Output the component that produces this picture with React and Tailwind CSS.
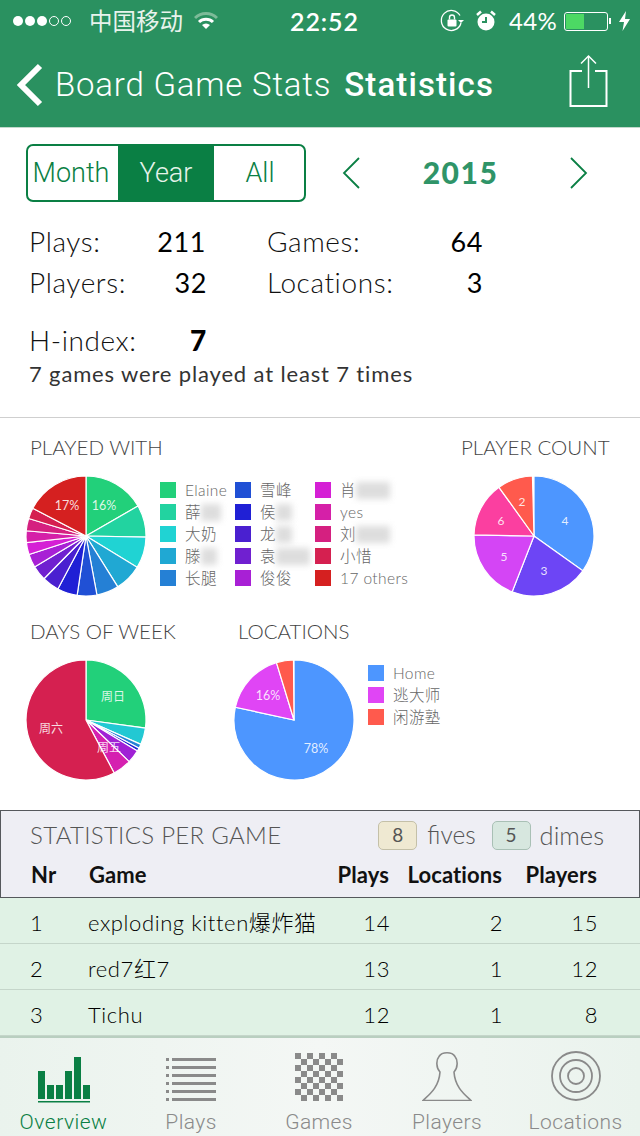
import React from "react";

const CJK = '"Noto Sans CJK SC"';
function pt(cx, cy, r, a) {
  const t = (a * Math.PI) / 180;
  return [cx + r * Math.sin(t), cy - r * Math.cos(t)];
}
function Pie({ size = 124, r = 60, stops, colors, labels = [], font = 12 }) {
  const c = size / 2;
  let prev = 0;
  return (
    <svg width={size} height={size} viewBox={`0 0 ${size} ${size}`} className="shrink-0 block">
      {stops.map((s, i) => {
        const [x1, y1] = pt(c, c, r, prev);
        const [x2, y2] = pt(c, c, r, s);
        const large = s - prev > 180 ? 1 : 0;
        const d = `M${c} ${c}L${x1} ${y1}A${r} ${r} 0 ${large} 1 ${x2} ${y2}Z`;
        prev = s;
        return <path key={i} d={d} fill={colors[i]} stroke="#fff" strokeWidth="1.2" />;
      })}
      {labels.map((l, i) => (
        <text key={i} x={l[1]} y={l[2]} fontSize={font} fill="#fff" fillOpacity="0.85" textAnchor="middle" fontFamily={`Lato, ${CJK}, sans-serif`}>
          {l[0]}
        </text>
      ))}
    </svg>
  );
}

function Blur({ w }) {
  return <span className="inline-block h-[17px] align-middle bg-[#cfcfcf] blur-[3px] opacity-70" style={{ width: w }} />;
}

function Legend({ items, width }) {
  return (
    <div className="flex flex-col gap-[6px]" style={{ width }}>
      {items.map((it, i) => (
        <div key={i} className="flex items-center h-[16px] whitespace-nowrap">
          <span className="w-[16px] h-[16px] mr-[9px] shrink-0" style={{ background: it[0] }} />
          <span className="text-[15.5px] leading-[16px] text-[#666] font-light tracking-[0.4px]">{it[1]}</span>
          {it[2] ? <Blur w={it[2]} /> : null}
        </div>
      ))}
    </div>
  );
}

const withColors = ["#22d07a","#22d3a0","#20d3d3","#20a8d3","#2580d5","#2050d5","#2020d5","#4a20d0","#7020d0","#a820d5","#d520d5","#d520a8","#d52080","#d52050","#d52020"];
const title = "text-[20.5px] leading-[24px] text-[#444] font-light";

function StatusBar() {
  return (
    <div className="h-[40px] flex items-center pl-[13px] pt-[2px] text-white">
      <div className="flex items-center gap-[2px] w-[66px]">
        {[1,1,1,0,0].map((f, i) => (
          <span key={i} className={f ? "w-[10px] h-[10px] rounded-full bg-white" : "w-[10px] h-[10px] rounded-full border border-white"} />
        ))}
      </div>
      <span className="text-[23.5px] leading-[28px] ml-[10px] text-[#e8f3ec] whitespace-nowrap">中国移动</span>
      <svg width="24" height="18" viewBox="0 0 24 18" className="ml-[11px]">
        <path d="M1 6 A16 16 0 0 1 23 6" fill="none" stroke="#7dbb99" strokeWidth="3" />
        <path d="M5 10 A10 10 0 0 1 19 10" fill="none" stroke="#fff" strokeWidth="3" />
        <path d="M8 13 L12 17 L16 13 A6 6 0 0 0 8 13Z" fill="#fff" />
      </svg>
      <span className="ml-[72px] text-[25px] leading-[28px] font-semibold tracking-[0.9px] w-[72px] whitespace-nowrap">22:52</span>
      <svg width="24" height="24" viewBox="0 0 24 24" className="ml-[78px]">
        <path d="M21 14 A10 10 0 1 1 20 6.5" fill="none" stroke="#fff" strokeWidth="1.3" />
        <path d="M18 11 h6 l-3 3z" fill="#fff" />
        <rect x="7.5" y="10.5" width="9" height="7" rx="1" fill="#fff" />
        <path d="M9.5 10.5 V8.5 a2.5 2.5 0 0 1 5 0 V10.5" fill="none" stroke="#fff" strokeWidth="1.4" />
      </svg>
      <svg width="22" height="24" viewBox="0 0 22 24" className="ml-[11px]">
        <circle cx="11" cy="13" r="8.5" fill="#fff" />
        <path d="M11 8 V13 H7" fill="none" stroke="#2a9160" strokeWidth="2" />
        <path d="M2 6 L6 2.5 M20 6 L16 2.5" stroke="#fff" strokeWidth="2.5" />
      </svg>
      <span className="ml-[12px] text-[24px] leading-[28px] tracking-[0.3px] whitespace-nowrap">44%</span>
      <div className="ml-[7px] w-[44px] h-[19px] border border-white rounded-[3px] p-[1px] shrink-0">
        <div className="w-[18px] h-full bg-[#4cd964]" />
      </div>
      <span className="w-[2px] h-[6px] bg-white ml-[1px] shrink-0" />
      <svg width="11" height="20" viewBox="0 0 11 20" className="ml-[8px] shrink-0">
        <path d="M7 0 L0 11 H5 L3.5 20 L11 8 H6Z" fill="#fff" />
      </svg>
    </div>
  );
}

function NavBar() {
  return (
    <div className="h-[88px] flex items-center border-b border-[#c3d9cc] relative pt-[3px]">
      <svg width="28" height="44" viewBox="0 0 28 44" className="ml-[16px] shrink-0">
        <path d="M24 3 L5 22 L24 41" fill="none" stroke="#fff" strokeWidth="6" />
      </svg>
      <span className="ml-[11px] text-[33px] leading-[40px] text-white font-['Roboto',sans-serif] font-light tracking-[0.8px] whitespace-nowrap">Board Game Stats</span>
      <span className="ml-[13px] text-[33px] leading-[40px] text-white font-['Roboto',sans-serif] font-medium tracking-[1.1px] whitespace-nowrap">Statistics</span>
      <svg width="40" height="54" viewBox="0 0 40 54" className="absolute left-[569px] top-[14px]">
        <path d="M13 17 H1.5 V52 H37.5 V17 H26" fill="none" stroke="#fff" strokeWidth="2" />
        <path d="M19.5 2 V34" stroke="#fff" strokeWidth="1.5" />
        <path d="M12 9.5 L19.5 2 L27 9.5" fill="none" stroke="#fff" strokeWidth="1.5" />
      </svg>
    </div>
  );
}

function Controls() {
  return (
    <div className="flex items-center pl-[26px] pt-[16px] h-[74px]">
      <div className="flex w-[280px] h-[58px] border-2 border-[#0a7f44] rounded-[7px] overflow-hidden text-[27px] leading-[32px] text-[#0a7f44] font-['Roboto',sans-serif] font-light">
        <div className="w-[90px] flex items-center justify-center pr-[4px]">Month</div>
        <div className="w-[96px] flex items-center justify-center bg-[#0a7f44] text-[#e5f3ea]">Year</div>
        <div className="flex-1 flex items-center justify-center pl-[2px]">All</div>
      </div>
      <svg width="18" height="32" viewBox="0 0 18 32" className="ml-[36px]">
        <path d="M17 1 L2 16 L17 31" fill="none" stroke="#0a7f44" strokeWidth="1.8" />
      </svg>
      <span className="w-[210px] text-center text-[30px] leading-[40px] font-black text-[#2f9468] tracking-[1.5px] pr-[9px] pb-[2px]">2015</span>
      <svg width="18" height="32" viewBox="0 0 18 32">
        <path d="M1 1 L16 16 L1 31" fill="none" stroke="#0a7f44" strokeWidth="1.8" />
      </svg>
    </div>
  );
}

function Stat({ label, value, labelW, valW }) {
  return (
    <div className="flex items-baseline">
      <span className="font-light text-[28px]" style={{ width: labelW }}>{label}</span>
      <span className="text-right text-black" style={{ width: valW }}>{value}</span>
    </div>
  );
}

function Stats() {
  return (
    <div className="pl-[29px] pt-[19px] h-[216px] border-b border-[#cfcfcf] text-[#111]">
      <div className="grid grid-cols-[238px_1fr] text-[27px] leading-[40px] tracking-[0.6px]">
        <Stat label="Plays:" value="211" labelW={100} valW={77} />
        <Stat label="Games:" value="64" labelW={150} valW={66} />
        <Stat label="Players:" value="32" labelW={120} valW={58} />
        <Stat label="Locations:" value="3" labelW={150} valW={66} />
      </div>
      <div className="flex items-baseline mt-[17px] text-[28px] leading-[40px] tracking-[0.6px] font-light">
        <span className="w-[161px]">H-index:</span>
        <span className="font-black text-black">7</span>
      </div>
      <div className="mt-[-1px] text-[22px] leading-[30px] tracking-[0.85px] text-[#333] whitespace-nowrap">7 games were played at least 7 times</div>
    </div>
  );
}

function Charts() {
  return (
    <div className="h-[392px]">
      <div className="flex h-[184px]">
        <div className="w-[430px] pl-[30px] pt-[17px]">
          <div className={title}>PLAYED WITH</div>
          <div className="flex mt-[15px] ml-[-6px]">
            <Pie
              stops={[60,91,121.5,148,169.5,188.5,208,224.5,239,252,263.6,275,287,297.5,360]}
              colors={withColors}
              labels={[["16%",80,36],["17%",43,36]]}
              font={12.5}
            />
            <div className="flex ml-[12px] mt-[8px]">
              <Legend width={75} items={[["#22d07a","Elaine"],["#22d3a0","薛",20],["#20d3d3","大奶"],["#20a8d3","滕",16],["#2580d5","长腿"]]} />
              <Legend width={80} items={[["#2050d5","雪峰"],["#2020d5","侯",16],["#4a20d0","龙",16],["#7020d0","袁",34],["#a820d5","俊俊"]]} />
              <Legend width={110} items={[["#d520d5","肖",34],["#d520a8","yes"],["#d52080","刘",34],["#d52050","小惜"],["#d52020","17 others"]]} />
            </div>
          </div>
        </div>
        <div className="pl-[31px] pt-[17px] flex-1">
          <div className={title}>PLAYER COUNT</div>
          <div className="mt-[15px] ml-[11px]">
            <Pie
              stops={[125.5,201.4,271,324.3,358.5]}
              colors={["#4d96ff","#6d45f5","#d445f5","#fb3fa0","#ff5a4d"]}
              labels={[["4",93,51],["3",72,101],["5",32,87],["6",29,51],["2",50,32]]}
            />
          </div>
        </div>
      </div>
      <div className="flex">
        <div className="w-[208px] pl-[30px] pt-[17px]">
          <div className={title}>DAYS OF WEEK</div>
          <div className="mt-[15px] ml-[-6px]">
            <Pie
              stops={[97.7,114,118,121,134,152,360]}
              colors={["#22d07a","#22c8d3","#2580d5","#2020d5","#a020d5","#d520b0","#d52050"]}
              labels={[["周日",89,43],["周六",27,75],["周五",85,94]]}
            />
          </div>
        </div>
        <div className="pl-[30px] pt-[17px] flex-1">
          <div className={title}>LOCATIONS</div>
          <div className="flex mt-[15px] ml-[-6px]">
            <Pie
              stops={[282.3,343,359.5]}
              colors={["#4d96ff","#e045f5","#ff5a4d"]}
              labels={[["16%",36,42],["78%",84,95]]}
              font={12.5}
            />
            <div className="ml-[12px] mt-[7px]">
              <Legend width={90} items={[["#4d96ff","Home"],["#e045f5","逃大师"],["#ff5a4d","闲游塾"]]} />
            </div>
          </div>
        </div>
      </div>
    </div>
  );
}

const cols = "grid grid-cols-[58px_1fr_60px_113px_95px] pl-[30px] pr-[42px]";
const rows = [["1","exploding kitten爆炸猫","14","2","15"],["2","red7红7","13","1","12"],["3","Tichu","12","1","8"]];

function Table() {
  return (
    <div>
      <div className="h-[88px] border border-[#55585c] bg-[#eeeef4]">
        <div className="flex items-center h-[48px] pl-[29px]">
          <span className="text-[24px] leading-[28px] text-[#555] font-light tracking-[0.3px]">STATISTICS PER GAME</span>
          <div className="ml-auto flex items-center pr-[35px]">
            <span className="w-[39px] h-[29px] flex items-center justify-center rounded-[5px] border border-[#c4c0a8] bg-[#efe9d2] text-[19px] text-[#555]">8</span>
            <span className="ml-[10px] text-[24.5px] text-[#555] font-light">fives</span>
            <span className="ml-[16px] w-[39px] h-[29px] flex items-center justify-center rounded-[5px] border border-[#a9c0b5] bg-[#d7e7df] text-[19px] text-[#555]">5</span>
            <span className="ml-[9px] text-[25.5px] text-[#555] font-light">dimes</span>
          </div>
        </div>
        <div className={`${cols} pl-[29px] pt-[1px] text-[22px] leading-[30px] font-bold text-[#111] tracking-[0.1px]`}>
          <span>Nr</span>
          <span>Game</span>
          <span className="text-right">Plays</span>
          <span className="text-right whitespace-nowrap">Locations</span>
          <span className="text-right">Players</span>
        </div>
      </div>
      {rows.map((r) => (
        <div key={r[0]} className={`${cols} h-[46px] pt-[3px] items-center bg-[#e0f2e5] border-b border-[#c5d6ca] text-[22px] font-light text-black tracking-[0.6px]`}>
          <span>{r[0]}</span>
          <span className="whitespace-nowrap">{r[1]}</span>
          <span className="text-right">{r[2]}</span>
          <span className="text-right">{r[3]}</span>
          <span className="text-right">{r[4]}</span>
        </div>
      ))}
    </div>
  );
}

const G = "#0a7f44";
const M = "#8a8a8a";
function OverviewIcon() {
  const b = [[0,14],[9,28],[18,28],[27,14],[36,0],[45,28]];
  return (
    <svg width="53" height="46" viewBox="0 0 53 46" className="ml-[2px]">
      {b.map((x, i) => <rect key={i} x={x[0]} y={x[1]} width="7" height={42 - x[1]} fill={G} />)}
      <rect x="0" y="44" width="52" height="1.5" fill={G} />
    </svg>
  );
}
function PlaysIcon() {
  return (
    <svg width="50" height="46" viewBox="0 0 50 46">
      {[1,9,17,25,33,41].map((y) => (
        <g key={y}><rect x="0" y={y} width="3" height="3" fill={M} /><rect x="6" y={y} width="44" height="3" fill={M} /></g>
      ))}
    </svg>
  );
}
function GamesIcon() {
  const cells = [];
  for (let r = 0; r < 8; r++) for (let c = 0; c < 8; c++) if ((r + c) % 2 === 0) cells.push(<rect key={`${r}-${c}`} x={c * 6} y={r * 6} width="6" height="6" fill={M} />);
  return <svg width="48" height="48" viewBox="0 0 48 48" className="mb-[2px]">{cells}</svg>;
}
function PlayersIcon() {
  return (
    <svg width="50" height="50" viewBox="0 0 50 50" className="mb-[2px]">
      <path d="M1 49.5 H49 C42 43 33 36 32 21 C36 17 36 9 33 5.5 C30 0.5 20 0.5 17 5.5 C14 9 14 17 18 21 C17 36 8 43 1 49.5Z" fill="none" stroke={M} strokeWidth="1.6" />
    </svg>
  );
}
function LocationsIcon() {
  return (
    <svg width="50" height="50" viewBox="0 0 50 50" className="mb-[2px]">
      <circle cx="25" cy="25" r="24" fill="none" stroke={M} strokeWidth="1.8" />
      <circle cx="25" cy="25" r="16" fill="none" stroke={M} strokeWidth="1.8" />
      <circle cx="25" cy="25" r="8" fill="none" stroke={M} strokeWidth="1.8" />
    </svg>
  );
}

function Tab({ label, active, children, w }) {
  return (
    <div className="flex flex-col items-center" style={{ width: w }}>
      <div className="h-[69px] flex items-end justify-center pb-[4px]">{children}</div>
      <span className={active ? "mt-[3px] text-[21px] leading-[24px] text-[#0a7f44] tracking-[0.5px]" : "mt-[3px] text-[21px] leading-[24px] text-[#8a8a8a] tracking-[0.4px]"}>{label}</span>
    </div>
  );
}

function TabBar() {
  return (
    <div className="h-[100px] border-t-2 border-[#b9cfc0] bg-gradient-to-r from-[#eaf3ed] via-[#f4f7f5] to-[#eaf3ed] flex font-['Roboto',sans-serif] font-light">
      <Tab label="Overview" active w={127}><OverviewIcon /></Tab>
      <Tab label="Plays" w={128}><PlaysIcon /></Tab>
      <Tab label="Games" w={128}><GamesIcon /></Tab>
      <Tab label="Players" w={128}><PlayersIcon /></Tab>
      <Tab label="Locations" w={129}><LocationsIcon /></Tab>
    </div>
  );
}

export default function App() {
  return (
    <div className="w-[640px] h-[1136px] overflow-hidden bg-white flex flex-col" style={{ fontFamily: `Lato, ${CJK}, sans-serif` }}>
      <div className="bg-[#2a9160] h-[128px] shrink-0">
        <StatusBar />
        <NavBar />
      </div>
      <Controls />
      <Stats />
      <Charts />
      <Table />
      <TabBar />
    </div>
  );
}
